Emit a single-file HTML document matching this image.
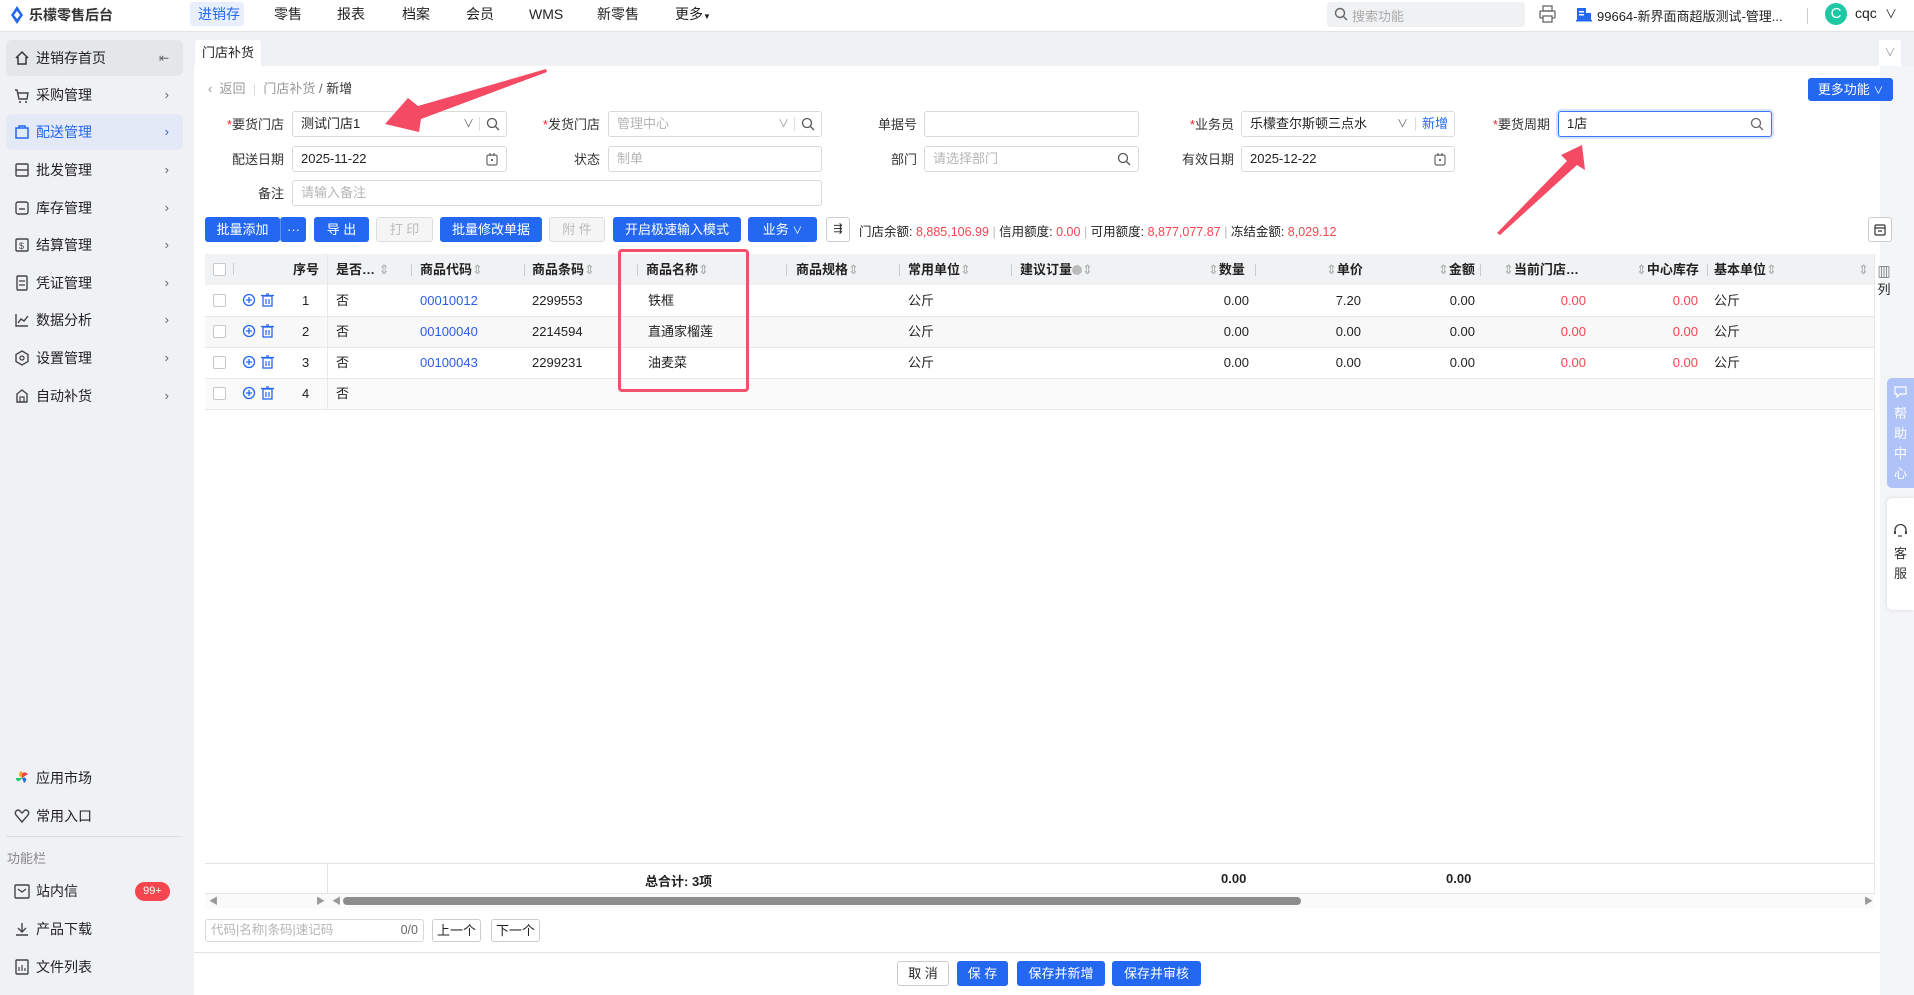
<!DOCTYPE html>
<html><head><meta charset="utf-8"><style>
*{box-sizing:border-box;margin:0;padding:0}
body{width:1914px;height:995px;position:relative;overflow:hidden;background:#fff;font-family:"Liberation Sans","Noto Sans CJK SC",sans-serif;font-size:13px;color:#222}
.a{position:absolute;white-space:nowrap}
.top{left:0;top:0;width:1914px;height:32px;border-bottom:1px solid #e3e3e3;background:#fff}
.nav{top:0;height:32px;line-height:28px;font-size:14px;color:#222}
.side{left:0;top:32px;width:194px;height:963px;background:#f0f1f4}
.si{left:6px;width:177px;height:36px;line-height:36px;font-size:14px;color:#222;padding-left:30px;border-radius:6px}
.si .ch{position:absolute;right:14px;top:0;color:#666;font-size:13px}
.main{left:194px;top:66px;width:1686px;height:929px;background:#fff}
.lbl{font-size:13px;color:#333;text-align:right}
.req{color:#f5222d}
.inp{height:26px;border:1px solid #d9d9d9;border-radius:3px;background:#fff;line-height:24px;padding-left:8px;font-size:13px}
.ph{color:#b5b5b5}
.btn{height:25px;line-height:25px;border-radius:3px;background:#2468f2;color:#fff;font-size:13px;text-align:center}
.dis{background:#f5f5f5;color:#bbb;border:1px solid #ddd;line-height:23px}
.th{top:254px;height:31px;line-height:31px;font-weight:bold;font-size:13px;color:#222}
.td{height:31px;line-height:31px;font-size:13px}
.red{color:#f5454f}
.blue{color:#2a5ee8}
.cb{width:13px;height:13px;border:1px solid #c8c8c8;border-radius:2px;background:#fff}
.sep{width:1px;height:12px;background:#ccc}
</style></head><body>

<div class="a top"></div>
<svg class="a" style="left:10px;top:6px" width="14" height="18" viewBox="0 0 14 18"><path d="M7 0 L13 9 L7 18 L1 9Z" fill="#2468f2"/><path d="M7 5 L10 9 L7 13 L4 9Z" fill="#fff"/></svg>
<div class="a" style="left:29px;top:5px;font-size:14px;font-weight:bold;color:#333">乐檬零售后台</div>
<div class="a" style="left:190px;top:2px;width:54px;height:24px;background:#e8eefc;border-radius:3px"></div>
<div class="a nav" style="left:198px;color:#2468f2">进销存</div>
<div class="a nav" style="left:274px">零售</div>
<div class="a nav" style="left:337px">报表</div>
<div class="a nav" style="left:402px">档案</div>
<div class="a nav" style="left:466px">会员</div>
<div class="a nav" style="left:529px">WMS</div>
<div class="a nav" style="left:597px">新零售</div>
<div class="a nav" style="left:675px">更多<span style="font-size:8px">▼</span></div>
<div class="a" style="left:1327px;top:2px;width:198px;height:25px;background:#f0f1f3;border-radius:3px"></div>
<svg class="a" style="left:1334px;top:7px" width="14" height="14" viewBox="0 0 14 14"><circle cx="6" cy="6" r="4.5" stroke="#666" stroke-width="1.4" fill="none"/><path d="M9.5 9.5L13 13" stroke="#666" stroke-width="1.4"/></svg>
<div class="a" style="left:1352px;top:6px;color:#aaa;font-size:13px">搜索功能</div>
<svg class="a" style="left:1539px;top:5px" width="17" height="18" viewBox="0 0 17 18"><rect x="4" y="1" width="9" height="5" fill="none" stroke="#666" stroke-width="1.3"/><rect x="1" y="6" width="15" height="7" rx="1" fill="none" stroke="#666" stroke-width="1.3"/><rect x="4" y="11" width="9" height="6" fill="#fff" stroke="#666" stroke-width="1.3"/></svg>
<svg class="a" style="left:1576px;top:7px" width="16" height="15" viewBox="0 0 16 15"><rect x="1" y="1" width="9" height="12" fill="#2468f2"/><rect x="3" y="4" width="5" height="1.5" fill="#fff"/><rect x="3" y="7" width="5" height="1.5" fill="#fff"/><rect x="10" y="6" width="5" height="7" fill="#2468f2"/><rect x="0" y="13" width="16" height="1.5" fill="#2468f2"/></svg>
<div class="a" style="left:1597px;top:6px;font-size:13px;color:#222">99664-新界面商超版测试-管理...</div>
<div class="a" style="left:1807px;top:8px;width:1px;height:16px;background:#ccc"></div>
<div class="a" style="left:1825px;top:3px;width:22px;height:22px;border-radius:50%;background:#1ec8a5;color:#fff;text-align:center;line-height:22px;font-size:15px">C</div>
<div class="a" style="left:1855px;top:5px;font-size:14px">cqc</div>
<div class="a" style="left:1885px;top:5px;font-size:12px;color:#333">∨</div>

<div class="a side"></div>
<div class="a si" style="top:40px;background:#e4e6ea">进销存首页<span class="ch" style="font-size:12px">⇤</span><svg style="position:absolute;left:8px;top:10px" width="16" height="16" viewBox="0 0 16 16"><path d="M2 8L8 2L14 8M4 7V14H12V7" fill="none" stroke="#333" stroke-width="1.5"/></svg></div>
<div class="a si" style="top:77px">采购管理<span class="ch">›</span><svg style="position:absolute;left:8px;top:11px" width="16" height="16" viewBox="0 0 16 16"><path d="M1 2H3L5 11H13L14 5H4" fill="none" stroke="#444" stroke-width="1.4"/><circle cx="6" cy="14" r="1" fill="#444"/><circle cx="12" cy="14" r="1" fill="#444"/></svg></div>
<div class="a si" style="top:114px;background:#e3e9f7;color:#2468f2">配送管理<span class="ch" style="color:#2468f2">›</span><svg style="position:absolute;left:8px;top:10px" width="16" height="16" viewBox="0 0 16 16"><path d="M2 4H14V14H2Z M5 4V2H11V4" fill="none" stroke="#2468f2" stroke-width="1.5"/></svg></div>
<div class="a si" style="top:152px">批发管理<span class="ch">›</span><svg style="position:absolute;left:8px;top:10px" width="16" height="16" viewBox="0 0 16 16"><rect x="2" y="2" width="12" height="12" rx="1" fill="none" stroke="#444" stroke-width="1.4"/><path d="M2 8H14" stroke="#444" stroke-width="1.4"/></svg></div>
<div class="a si" style="top:190px">库存管理<span class="ch">›</span><svg style="position:absolute;left:8px;top:10px" width="16" height="16" viewBox="0 0 16 16"><rect x="2" y="2" width="12" height="12" rx="2" fill="none" stroke="#444" stroke-width="1.4"/><path d="M5 9H11" stroke="#444" stroke-width="1.4"/></svg></div>
<div class="a si" style="top:227px">结算管理<span class="ch">›</span><svg style="position:absolute;left:8px;top:10px" width="16" height="16" viewBox="0 0 16 16"><rect x="2" y="2" width="12" height="12" rx="1" fill="none" stroke="#444" stroke-width="1.4"/><text x="5" y="12" font-size="9" fill="#444">$</text></svg></div>
<div class="a si" style="top:265px">凭证管理<span class="ch">›</span><svg style="position:absolute;left:8px;top:10px" width="16" height="16" viewBox="0 0 16 16"><rect x="3" y="1" width="10" height="14" rx="1" fill="none" stroke="#444" stroke-width="1.4"/><path d="M5 6H11M5 10H11" stroke="#444" stroke-width="1.2"/></svg></div>
<div class="a si" style="top:302px">数据分析<span class="ch">›</span><svg style="position:absolute;left:8px;top:10px" width="16" height="16" viewBox="0 0 16 16"><path d="M2 2V14H14M4 11L7 7L10 9L14 4" fill="none" stroke="#444" stroke-width="1.4"/></svg></div>
<div class="a si" style="top:340px">设置管理<span class="ch">›</span><svg style="position:absolute;left:8px;top:10px" width="16" height="16" viewBox="0 0 16 16"><path d="M8 1L14 4.5V11.5L8 15L2 11.5V4.5Z" fill="none" stroke="#444" stroke-width="1.4"/><circle cx="8" cy="8" r="2" fill="none" stroke="#444" stroke-width="1.3"/></svg></div>
<div class="a si" style="top:378px">自动补货<span class="ch">›</span><svg style="position:absolute;left:8px;top:10px" width="16" height="16" viewBox="0 0 16 16"><path d="M3 6L8 2L13 6V14H3Z" fill="none" stroke="#444" stroke-width="1.4"/><rect x="6" y="9" width="4" height="5" fill="none" stroke="#444" stroke-width="1.2"/></svg></div>

<div class="a si" style="top:760px">应用市场<svg style="position:absolute;left:8px;top:10px" width="16" height="16" viewBox="0 0 16 16"><path d="M8 1C4 2 4 6 8 8Z" fill="#f5a623"/><path d="M8 8C12 6 14 10 10 13Z" fill="#2468f2"/><path d="M8 8C6 12 2 12 2 8Z" fill="#1ec86e"/><path d="M8 8L14 4C12 2 10 2 8 3Z" fill="#f5454f"/></svg></div>
<div class="a si" style="top:798px">常用入口<svg style="position:absolute;left:8px;top:10px" width="16" height="16" viewBox="0 0 16 16"><path d="M8 14L2 7C0 4 3 1 5.5 2.5L8 5L10.5 2.5C13 1 16 4 14 7Z" fill="none" stroke="#444" stroke-width="1.4"/></svg></div>
<div class="a" style="left:6px;top:836px;width:177px;height:1px;background:#dcdde0"></div>
<div class="a" style="left:7px;top:848px;color:#888;font-size:13px">功能栏</div>
<div class="a si" style="top:873px">站内信<svg style="position:absolute;left:8px;top:11px" width="16" height="15" viewBox="0 0 16 15"><rect x="1" y="1" width="14" height="13" rx="1" fill="none" stroke="#444" stroke-width="1.4"/><path d="M4 5L8 8L12 5" fill="none" stroke="#444" stroke-width="1.3"/></svg><span style="position:absolute;left:129px;top:9px;width:35px;height:19px;border-radius:10px;background:#f5454f;color:#fff;font-size:11px;line-height:19px;text-align:center">99+</span></div>
<div class="a si" style="top:911px">产品下载<svg style="position:absolute;left:8px;top:10px" width="16" height="16" viewBox="0 0 16 16"><path d="M8 2V10M4 7L8 11L12 7M2 14H14" fill="none" stroke="#444" stroke-width="1.4"/></svg></div>
<div class="a si" style="top:949px">文件列表<svg style="position:absolute;left:8px;top:10px" width="16" height="16" viewBox="0 0 16 16"><rect x="2" y="1" width="12" height="14" rx="1" fill="none" stroke="#444" stroke-width="1.4"/><path d="M5 12V8M8 12V6M11 12V9" stroke="#444" stroke-width="1.2"/></svg></div>

<div class="a" style="left:194px;top:32px;width:1720px;height:34px;background:#f0f1f4"></div>
<div class="a" style="left:195px;top:40px;width:66px;height:26px;background:#fff;border-radius:3px 3px 0 0;padding-left:7px;line-height:26px;font-size:13px">门店补货</div>
<div class="a" style="left:1879px;top:40px;width:22px;height:26px;background:#fff;color:#999;text-align:center;line-height:26px;font-size:11px">∨</div>

<div class="a main"></div>
<div class="a" style="left:1880px;top:66px;width:34px;height:929px;background:#f4f5f7"></div>

<div class="a" style="left:208px;top:78px;font-size:13px;color:#999">‹&nbsp; 返回 &nbsp;<span style="color:#ddd">|</span>&nbsp; 门店补货 <span style="color:#666">/</span> <span style="color:#333">新增</span></div>
<div class="a btn" style="left:1808px;top:78px;width:85px;height:23px;line-height:23px">更多功能 <span style="font-size:10px">∨</span></div>

<div class="a lbl" style="left:200px;top:114px;width:84px"><span class="req">*</span>要货门店</div>
<div class="a inp" style="left:292px;top:111px;width:215px">测试门店1<span style="position:absolute;right:32px;color:#666;font-size:11px">∨</span><span style="position:absolute;right:26px;top:5px;width:1px;height:14px;background:#ddd"></span><svg style="position:absolute;right:6px;top:5px" width="14" height="14" viewBox="0 0 14 14"><circle cx="6" cy="6" r="4.5" stroke="#555" stroke-width="1.3" fill="none"/><path d="M9.5 9.5L13 13" stroke="#555" stroke-width="1.3"/></svg></div>
<div class="a lbl" style="left:520px;top:114px;width:80px"><span class="req">*</span>发货门店</div>
<div class="a inp ph" style="left:608px;top:111px;width:214px">管理中心<span style="position:absolute;right:32px;color:#999;font-size:11px">∨</span><span style="position:absolute;right:26px;top:5px;width:1px;height:14px;background:#ddd"></span><svg style="position:absolute;right:6px;top:5px" width="14" height="14" viewBox="0 0 14 14"><circle cx="6" cy="6" r="4.5" stroke="#555" stroke-width="1.3" fill="none"/><path d="M9.5 9.5L13 13" stroke="#555" stroke-width="1.3"/></svg></div>
<div class="a lbl" style="left:840px;top:114px;width:77px">单据号</div>
<div class="a inp" style="left:924px;top:111px;width:215px"></div>
<div class="a lbl" style="left:1150px;top:114px;width:84px"><span class="req">*</span>业务员</div>
<div class="a inp" style="left:1241px;top:111px;width:214px">乐檬查尔斯顿三点水<span style="position:absolute;right:46px;color:#666;font-size:11px">∨</span><span style="position:absolute;right:38px;top:5px;width:1px;height:14px;background:#ddd"></span><span style="position:absolute;right:6px;color:#2468f2">新增</span></div>
<div class="a lbl" style="left:1460px;top:114px;width:90px"><span class="req">*</span>要货周期</div>
<div class="a inp" style="left:1558px;top:111px;width:214px;border-color:#3c78f5;box-shadow:0 0 0 2px #d6e3fd">1店<svg style="position:absolute;right:7px;top:5px" width="14" height="14" viewBox="0 0 14 14"><circle cx="6" cy="6" r="4.5" stroke="#666" stroke-width="1.3" fill="none"/><path d="M9.5 9.5L13 13" stroke="#666" stroke-width="1.3"/></svg></div>

<div class="a lbl" style="left:200px;top:149px;width:84px">配送日期</div>
<div class="a inp" style="left:292px;top:146px;width:215px">2025-11-22<svg style="position:absolute;right:8px;top:6px" width="12" height="13" viewBox="0 0 12 13"><rect x="1" y="2" width="10" height="10" rx="1.5" fill="none" stroke="#666" stroke-width="1.2"/><path d="M4 0V3M8 0V3" stroke="#666" stroke-width="1.2"/><rect x="5" y="6" width="2" height="2" fill="#666"/></svg></div>
<div class="a lbl" style="left:520px;top:149px;width:80px">状态</div>
<div class="a inp ph" style="left:608px;top:146px;width:214px">制单</div>
<div class="a lbl" style="left:840px;top:149px;width:77px">部门</div>
<div class="a inp ph" style="left:924px;top:146px;width:215px">请选择部门<svg style="position:absolute;right:7px;top:5px" width="14" height="14" viewBox="0 0 14 14"><circle cx="6" cy="6" r="4.5" stroke="#555" stroke-width="1.3" fill="none"/><path d="M9.5 9.5L13 13" stroke="#555" stroke-width="1.3"/></svg></div>
<div class="a lbl" style="left:1150px;top:149px;width:84px">有效日期</div>
<div class="a inp" style="left:1241px;top:146px;width:214px">2025-12-22<svg style="position:absolute;right:8px;top:6px" width="12" height="13" viewBox="0 0 12 13"><rect x="1" y="2" width="10" height="10" rx="1.5" fill="none" stroke="#666" stroke-width="1.2"/><path d="M4 0V3M8 0V3" stroke="#666" stroke-width="1.2"/><rect x="5" y="6" width="2" height="2" fill="#666"/></svg></div>

<div class="a lbl" style="left:200px;top:183px;width:84px">备注</div>
<div class="a inp ph" style="left:292px;top:180px;width:530px">请输入备注</div>

<div class="a btn" style="left:205px;top:217px;width:75px">批量添加</div>
<div class="a btn" style="left:280px;top:217px;width:26px;border-left:1px solid #5a8ff7">···</div>
<div class="a btn" style="left:314px;top:217px;width:55px">导 出</div>
<div class="a btn dis" style="left:376px;top:217px;width:57px">打 印</div>
<div class="a btn" style="left:440px;top:217px;width:102px">批量修改单据</div>
<div class="a btn dis" style="left:549px;top:217px;width:56px">附 件</div>
<div class="a btn" style="left:613px;top:217px;width:128px">开启极速输入模式</div>
<div class="a btn" style="left:748px;top:217px;width:69px">业务 <span style="font-size:10px">∨</span></div>
<div class="a" style="left:826px;top:217px;width:24px;height:25px;border:1px solid #ccc;border-radius:3px;text-align:center;line-height:23px;font-size:11px">⇶</div>
<div class="a" style="left:859px;top:221px;font-size:12.5px;color:#222">门店余额: <span class="red">8,885,106.99</span> <span style="color:#bbb">|</span> 信用额度: <span class="red">0.00</span> <span style="color:#bbb">|</span> 可用额度: <span class="red">8,877,077.87</span> <span style="color:#bbb">|</span> 冻结金额: <span class="red">8,029.12</span></div>
<div class="a" style="left:1868px;top:217px;width:24px;height:25px;border:1px solid #ccc;border-radius:3px;background:#fff"><svg style="position:absolute;left:5px;top:6px" width="12" height="12" viewBox="0 0 12 12"><rect x="1" y="1" width="10" height="10" rx="1" fill="none" stroke="#333" stroke-width="1.2"/><path d="M1 4H11M4 7H8" stroke="#333" stroke-width="1.2"/></svg></div>

<div class="a" style="left:205px;top:254px;width:1669px;height:31px;background:#f1f2f4"></div>
<div class="a" style="left:205px;top:316px;width:1669px;height:31px;background:#f8f8f8"></div>
<div class="a" style="left:205px;top:378px;width:1669px;height:31px;background:#fafafa"></div>
<div class="a" style="left:205px;top:316px;width:1669px;height:1px;background:#e8e8e8"></div>
<div class="a" style="left:205px;top:347px;width:1669px;height:1px;background:#e8e8e8"></div>
<div class="a" style="left:205px;top:378px;width:1669px;height:1px;background:#e8e8e8"></div>
<div class="a" style="left:205px;top:409px;width:1669px;height:1px;background:#e8e8e8"></div>
<div class="a" style="left:327px;top:254px;width:1px;height:155px;background:#e8e8e8"></div>
<div class="a" style="left:1874px;top:254px;width:1px;height:640px;background:#e8e8e8"></div>
<div class="a" style="left:1875px;top:254px;width:18px;height:62px;text-align:center;font-size:13px;line-height:17px;padding-top:10px">▥<br>列</div>

<div class="a cb" style="left:213px;top:263px"></div>
<div class="a sep" style="left:233px;top:263px"></div>
<div class="a th" style="left:293px">序号</div>
<div class="a th" style="left:336px">是否… <span style="color:#aaa;font-weight:normal">⇕</span></div>
<div class="a sep" style="left:411px;top:264px"></div>
<div class="a th" style="left:420px">商品代码<span style="color:#aaa;font-weight:normal">⇕</span></div>
<div class="a sep" style="left:524px;top:264px"></div>
<div class="a th" style="left:532px">商品条码<span style="color:#aaa;font-weight:normal">⇕</span></div>
<div class="a sep" style="left:637px;top:264px"></div>
<div class="a th" style="left:646px">商品名称<span style="color:#aaa;font-weight:normal">⇕</span></div>
<div class="a sep" style="left:786px;top:264px"></div>
<div class="a th" style="left:796px">商品规格<span style="color:#aaa;font-weight:normal">⇕</span></div>
<div class="a sep" style="left:899px;top:264px"></div>
<div class="a th" style="left:908px">常用单位<span style="color:#aaa;font-weight:normal">⇕</span></div>
<div class="a sep" style="left:1011px;top:264px"></div>
<div class="a th" style="left:1020px">建议订量<span style="display:inline-block;width:10px;height:10px;border-radius:50%;background:#bbb;vertical-align:-1px"></span><span style="color:#aaa;font-weight:normal">⇕</span></div>
<div class="a th" style="left:1208px"><span style="color:#aaa;font-weight:normal">⇕</span>数量</div>
<div class="a sep" style="left:1255px;top:264px"></div>
<div class="a th" style="left:1326px"><span style="color:#aaa;font-weight:normal">⇕</span>单价</div>
<div class="a th" style="left:1438px"><span style="color:#aaa;font-weight:normal">⇕</span>金额</div>
<div class="a sep" style="left:1480px;top:264px"></div>
<div class="a th" style="left:1503px"><span style="color:#aaa;font-weight:normal">⇕</span>当前门店…</div>
<div class="a th" style="left:1636px"><span style="color:#aaa;font-weight:normal">⇕</span>中心库存</div>
<div class="a sep" style="left:1707px;top:264px"></div>
<div class="a th" style="left:1714px">基本单位<span style="color:#aaa;font-weight:normal">⇕</span></div>
<div class="a th" style="left:1858px;color:#aaa;font-weight:normal">⇕</div>

<div class="a cb" style="left:213px;top:294px"></div><div class="a cb" style="left:213px;top:325px"></div><div class="a cb" style="left:213px;top:356px"></div><div class="a cb" style="left:213px;top:387px"></div>
<svg class="a" style="left:242px;top:292px" width="34" height="110" viewBox="0 0 34 110">
<g id="ic"><circle cx="7" cy="8" r="5.5" fill="none" stroke="#2468f2" stroke-width="1.3"/><path d="M7 5V11M4 8H10" stroke="#2468f2" stroke-width="1.3"/><rect x="21" y="4" width="9" height="10" fill="none" stroke="#2468f2" stroke-width="1.3"/><path d="M19 3.5H32M24 2H27M24 7V12M27 7V12" stroke="#2468f2" stroke-width="1.2"/></g>
<use href="#ic" y="31"/><use href="#ic" y="62"/><use href="#ic" y="93"/></svg>

<div class="a td" style="left:302px;top:285px">1</div><div class="a td" style="left:302px;top:316px">2</div><div class="a td" style="left:302px;top:347px">3</div><div class="a td" style="left:302px;top:378px">4</div>
<div class="a td" style="left:336px;top:285px">否</div><div class="a td" style="left:336px;top:316px">否</div><div class="a td" style="left:336px;top:347px">否</div><div class="a td" style="left:336px;top:378px">否</div>
<div class="a td blue" style="left:420px;top:285px">00010012</div><div class="a td blue" style="left:420px;top:316px">00100040</div><div class="a td blue" style="left:420px;top:347px">00100043</div>
<div class="a td" style="left:532px;top:285px">2299553</div><div class="a td" style="left:532px;top:316px">2214594</div><div class="a td" style="left:532px;top:347px">2299231</div>
<div class="a td" style="left:648px;top:285px">铁框</div><div class="a td" style="left:648px;top:316px">直通家榴莲</div><div class="a td" style="left:648px;top:347px">油麦菜</div>
<div class="a td" style="left:908px;top:285px">公斤</div><div class="a td" style="left:908px;top:316px">公斤</div><div class="a td" style="left:908px;top:347px">公斤</div>
<div class="a td" style="left:1200px;top:285px;width:49px;text-align:right">0.00</div><div class="a td" style="left:1200px;top:316px;width:49px;text-align:right">0.00</div><div class="a td" style="left:1200px;top:347px;width:49px;text-align:right">0.00</div>
<div class="a td" style="left:1310px;top:285px;width:51px;text-align:right">7.20</div><div class="a td" style="left:1310px;top:316px;width:51px;text-align:right">0.00</div><div class="a td" style="left:1310px;top:347px;width:51px;text-align:right">0.00</div>
<div class="a td" style="left:1425px;top:285px;width:50px;text-align:right">0.00</div><div class="a td" style="left:1425px;top:316px;width:50px;text-align:right">0.00</div><div class="a td" style="left:1425px;top:347px;width:50px;text-align:right">0.00</div>
<div class="a td red" style="left:1536px;top:285px;width:50px;text-align:right">0.00</div><div class="a td red" style="left:1536px;top:316px;width:50px;text-align:right">0.00</div><div class="a td red" style="left:1536px;top:347px;width:50px;text-align:right">0.00</div>
<div class="a td red" style="left:1648px;top:285px;width:50px;text-align:right">0.00</div><div class="a td red" style="left:1648px;top:316px;width:50px;text-align:right">0.00</div><div class="a td red" style="left:1648px;top:347px;width:50px;text-align:right">0.00</div>
<div class="a td" style="left:1714px;top:285px">公斤</div><div class="a td" style="left:1714px;top:316px">公斤</div><div class="a td" style="left:1714px;top:347px">公斤</div>

<div class="a" style="left:618px;top:249px;width:131px;height:143px;border:3px solid #f2506c;border-radius:4px"></div>

<div class="a" style="left:205px;top:863px;width:1669px;height:1px;background:#e3e3e3"></div>
<div class="a" style="left:327px;top:863px;width:1px;height:45px;background:#e3e3e3"></div>
<div class="a" style="left:645px;top:871px;font-weight:bold;font-size:13px">总合计: 3项</div>
<div class="a" style="left:1221px;top:871px;font-weight:bold;font-size:13px">0.00</div>
<div class="a" style="left:1446px;top:871px;font-weight:bold;font-size:13px">0.00</div>
<div class="a" style="left:205px;top:893px;width:1669px;height:1px;background:#e3e3e3"></div>
<div class="a" style="left:205px;top:894px;width:1669px;height:14px;background:#fafafa"></div>
<div class="a" style="left:209px;top:894px;font-size:9px;color:#999">◀</div>
<div class="a" style="left:316px;top:894px;font-size:9px;color:#999">▶</div>
<div class="a" style="left:332px;top:894px;font-size:9px;color:#999">◀</div>
<div class="a" style="left:1864px;top:894px;font-size:9px;color:#999">▶</div>
<div class="a" style="left:343px;top:897px;width:958px;height:8px;border-radius:4px;background:#8c8c8c"></div>

<div class="a inp ph" style="left:205px;top:919px;width:219px;height:23px;line-height:21px;padding-left:5px;font-size:12.5px">代码|名称|条码|速记码<span style="position:absolute;right:5px;color:#666">0/0</span></div>
<div class="a" style="left:432px;top:919px;width:49px;height:23px;border:1px solid #ccc;border-radius:3px;text-align:center;line-height:21px;font-size:13px">上一个</div>
<div class="a" style="left:491px;top:919px;width:49px;height:23px;border:1px solid #ccc;border-radius:3px;text-align:center;line-height:21px;font-size:13px">下一个</div>

<div class="a" style="left:194px;top:952px;width:1686px;height:1px;background:#e3e3e3"></div>
<div class="a" style="left:897px;top:961px;width:52px;height:25px;border:1px solid #ccc;border-radius:3px;text-align:center;line-height:23px;font-size:13px">取 消</div>
<div class="a btn" style="left:957px;top:961px;width:51px">保 存</div>
<div class="a btn" style="left:1017px;top:961px;width:88px">保存并新增</div>
<div class="a btn" style="left:1112px;top:961px;width:89px">保存并审核</div>

<div class="a" style="left:1887px;top:378px;width:27px;height:110px;background:#b0c3f9;border-radius:5px 0 0 5px;color:#fff;text-align:center;font-size:13px;line-height:20px;padding-top:6px"><svg width="13" height="12" viewBox="0 0 13 12"><path d="M1 1H12V8H6L3 11V8H1Z" fill="none" stroke="#fff" stroke-width="1.2"/></svg><br>帮<br>助<br>中<br>心</div>
<div class="a" style="left:1887px;top:498px;width:27px;height:112px;background:#fff;border-radius:5px 0 0 5px;box-shadow:0 0 4px rgba(0,0,0,.12);text-align:center;font-size:13px;line-height:20px;padding-top:26px;color:#333"><svg width="15" height="14" viewBox="0 0 15 14"><path d="M2 8V6A5.5 5.5 0 0 1 13 6V8M5 12H9" fill="none" stroke="#444" stroke-width="1.3"/><rect x="1" y="7" width="2" height="3" fill="#444"/><rect x="12" y="7" width="2" height="3" fill="#444"/></svg><br>客<br>服</div>

<svg class="a" style="left:0;top:0" width="1914" height="300" viewBox="0 0 1914 300">
<polygon points="546,69 418,106 408,98 385,124 419,132 421,119 547,72" fill="#f44a63"/>
<polygon points="1497,233 1567,161 1561,155 1582,145 1585,170 1577,165 1500,235" fill="#f44a63"/>
</svg>
</body></html>
